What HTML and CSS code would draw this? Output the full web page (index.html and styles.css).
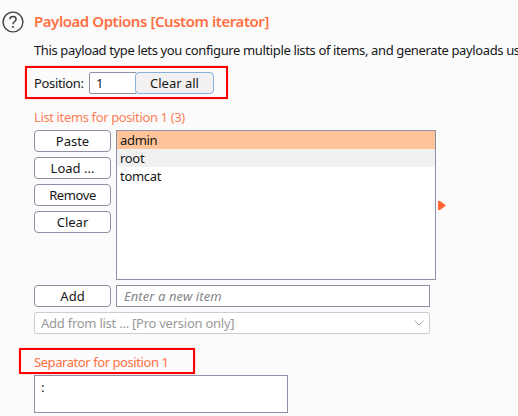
FILE: index.html
```
<!DOCTYPE html>
<html lang="en">
<head>
<meta charset="utf-8">
<title>Payload Options</title>
<link rel="stylesheet" href="styles.css">
</head>
<body>
<main class="panel">
  <header class="heading">
    <svg class="help" width="22" height="22" viewBox="0 0 22 22" fill="none" stroke="#424242">
      <circle cx="11" cy="11" r="9.9" stroke-width="1.4"/>
      <path d="M7.8 8.2C8 6.6 9.2 5.6 11 5.6S14.1 6.6 14.1 8.2C14.1 10.5 11 10.6 11 13.2" stroke-width="1.5"/>
      <circle cx="11" cy="16" r="1" fill="#424242" stroke="none"/>
    </svg>
    <h1 class="title">Payload Options [Custom iterator]</h1>
  </header>
  <section class="content">
    <p class="description">This payload type lets you configure multiple lists of items, and generate payloads us</p>
    <div class="position highlight">
      <label class="position-label">Position:</label>
      <div class="number">1</div>
      <button class="button clear-all">Clear all</button>
    </div>
    <h2 class="subtitle">List items for position 1 (3)</h2>
    <div class="editor">
      <div class="actions">
        <button class="button">Paste</button>
        <button class="button">Load ...</button>
        <button class="button remove">Remove</button>
        <button class="button">Clear</button>
      </div>
      <ul class="list">
        <li class="selected">admin</li>
        <li class="alternate">root</li>
        <li>tomcat</li>
      </ul>
      <svg class="arrow" width="8" height="9" viewBox="0 0 8 9"><path d="M0 0H2L8 4.5L2 9H0Z" fill="#ff6633"/></svg>
    </div>
    <div class="add-row">
      <button class="button">Add</button>
      <div class="new-item">Enter a new item</div>
    </div>
    <div class="select">
      <span>Add from list ... [Pro version only]</span>
      <svg width="10" height="6" viewBox="0 0 10 6" fill="none" stroke="#a8a8a8"><path d="M.6 .6L5 5L9.4 .6"/></svg>
    </div>
    <h2 class="separator-title highlight">Separator for position 1</h2>
    <div class="separator">:</div>
  </section>
</main>
</body>
</html>
```
FILE: styles.css
```
* { box-sizing: border-box; }
body {
  margin: 0;
  background: #fbfbfb;
  color: #171717;
  font: 13px/18px "Noto Sans", sans-serif;
  overflow: hidden;
}
h1, h2, p, ul { margin: 0; padding: 0; font-weight: 400; }
.panel { width: 518px; height: 416px; overflow: hidden; white-space: nowrap; }
.heading { display: flex; height: 40px; padding: 11px 0 0 2px; gap: 10px; }
.help { flex: none; }
.title { font-size: 15px; line-height: 20px; font-weight: 600; color: #ff7043; letter-spacing: -.44px; }
.content { padding-left: 34px; }
.description { height: 26px; line-height: 20px; letter-spacing: -.37px; }
.highlight { border: 2px solid #f00; box-shadow: 0 0 1px #ff8a8a; }
.position {
  display: flex;
  width: 203px;
  height: 33px;
  margin-left: -9px;
  padding: 4px 0 0 7px;
}
.position-label { width: 55px; line-height: 22px; letter-spacing: -.35px; }
.number {
  width: 48px;
  height: 22px;
  padding-left: 6px;
  border: 1px solid #8f8fa5;
  border-radius: 2px;
  background: #fff;
  line-height: 20px;
}
.button {
  flex: none;
  width: 77px;
  height: 22px;
  padding: 0;
  border: 1px solid #8f8fa5;
  border-radius: 4px;
  background: #fff;
  color: #171717;
  font: inherit;
  line-height: 20px;
}
.remove { letter-spacing: -.4px; }
.clear-all { width: 79px; margin-left: -2px; background: #f1f1f1; border-color: #87afda; }
.subtitle { height: 31px; padding-top: 9px; font-size: 13px; color: #ff7f56; letter-spacing: -.37px; }
.editor { display: flex; height: 150px; }
.actions { display: flex; flex-direction: column; gap: 5px; width: 82px; }
.list { width: 320px; height: 150px; border: 1px solid #8f8fa5; background: #fff; list-style: none; letter-spacing: -.3px; }
.list li { height: 18px; padding-left: 3px; }
.list .selected { background: #ffc499; }
.list .alternate { background: #f1f1f1; }
.arrow { margin: 71px 0 0 2px; }
.add-row { display: flex; gap: 5px; margin-top: 5px; }
.new-item {
  width: 314px;
  height: 22px;
  padding-left: 7px;
  border: 1px solid #8f8fa5;
  background: #fff;
  color: #858585;
  font-style: italic;
  line-height: 20px;
  letter-spacing: .08px;
}
.select {
  display: flex;
  align-items: center;
  justify-content: space-between;
  width: 396px;
  height: 22px;
  margin-top: 5px;
  padding: 0 5px 0 6px;
  border: 1px solid #cdcdcd;
  border-radius: 2px;
  background: #fff;
  color: #999;
  letter-spacing: -.25px;
}
.separator-title {
  width: 176px;
  height: 26px;
  margin: 14px 0 1px -15px;
  padding-left: 13px;
  font-size: 13px;
  line-height: 24px;
  color: #ff7043;
  letter-spacing: -.43px;
}
.separator { width: 254px; height: 38px; padding: 2px 6px; border: 1px solid #8f8fa5; background: #fff; }
```
